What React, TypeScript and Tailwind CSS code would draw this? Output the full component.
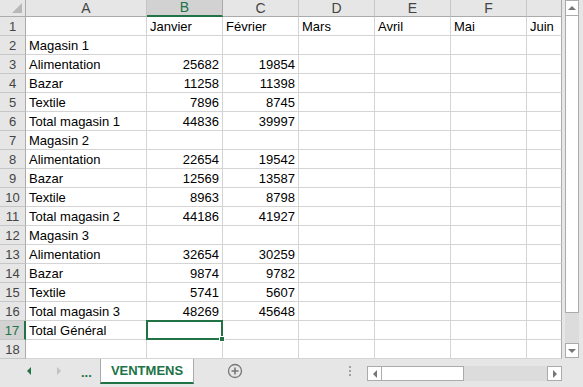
import { Fragment } from "react";

const cols = ["A", "B", "C", "D", "E", "F", ""];

const rows: (string | number)[][] = [
  ["", "Janvier", "Février", "Mars", "Avril", "Mai", "Juin"],
  ["Magasin 1"],
  ["Alimentation", 25682, 19854],
  ["Bazar", 11258, 11398],
  ["Textile", 7896, 8745],
  ["Total magasin 1", 44836, 39997],
  ["Magasin 2"],
  ["Alimentation", 22654, 19542],
  ["Bazar", 12569, 13587],
  ["Textile", 8963, 8798],
  ["Total magasin 2", 44186, 41927],
  ["Magasin 3"],
  ["Alimentation", 32654, 30259],
  ["Bazar", 9874, 9782],
  ["Textile", 5741, 5607],
  ["Total magasin 3", 48269, 45648],
  ["Total Général"],
  [],
];

function Sheet() {
  return (
    <div className="grid grid-cols-[26px_121px_76px_76px_76px_76px_76px_35px] grid-rows-[17px_repeat(18,19px)] w-[562px]">
      {/* corner */}
      <div className="relative bg-[#e6e6e6] border-r border-b border-[#ababab]">
        <div className="absolute right-[3px] bottom-[3px] w-0 h-0 border-l-[10px] border-l-transparent border-b-[10px] border-b-[#b8b8b8]" />
      </div>
      {cols.map((c, i) => (
        <div
          key={i}
          className={
            i === 1
              ? "flex items-center justify-center bg-[#d2d2d2] border-r border-[#ababab] border-b-2 border-b-[#217346] text-[#217346] text-[14px]"
              : i === 6
              ? "flex items-center justify-center bg-[#e6e6e6] border-r border-r-[#ababab] border-b border-b-[#ababab] text-[#444] text-[14px]"
              : "flex items-center justify-center bg-[#e6e6e6] border-r border-r-[#c6c6c6] border-b border-b-[#ababab] text-[#444] text-[14px]"
          }
        >
          {c}
        </div>
      ))}
      {rows.map((r, ri) => (
        <Fragment key={ri}>
          <div
            className={
              ri === 16
                ? "flex items-center justify-center bg-[#d2d2d2] border-r-2 border-r-[#217346] border-b border-b-[#c6c6c6] text-[#217346]"
                : "flex items-center justify-center bg-[#e6e6e6] border-r border-r-[#ababab] border-b border-b-[#c6c6c6] text-[#444]"
            }
          >
            {ri + 1}
          </div>
          {[0, 1, 2, 3, 4, 5, 6].map((ci) => {
            const v = r[ci];
            const num = typeof v === "number";
            const sel = ri === 16 && ci === 1;
            return (
              <div
                key={ci}
                className={
                  (ci === 6 ? "border-r-[#ababab] " : "border-r-[#d4d4d4] ") +
                  (sel ? "z-10 " : "overflow-hidden ") +
                  (num
                    ? "relative flex items-end justify-end pr-[3px] pb-[1px] border-r border-b border-b-[#d4d4d4] whitespace-nowrap"
                    : "relative flex items-end pl-[3px] pb-[1px] border-r border-b border-b-[#d4d4d4] whitespace-nowrap")
                }
              >
                {v}
                {sel && (
                  <div className="absolute -left-[1px] -top-[1px] right-[-1px] bottom-[-1px] border-2 border-[#217346]">
                    <div className="absolute -right-[4px] -bottom-[4px] w-[6px] h-[6px] bg-[#217346] border border-white" />
                  </div>
                )}
              </div>
            );
          })}
        </Fragment>
      ))}
    </div>
  );
}

function VScroll() {
  return (
    <div className="w-[21px] h-[359px] bg-[#e6e6e6] flex flex-col pl-[3px] pr-[4px]">
      <div className="h-[16px] bg-white border border-[#ababab] flex items-center justify-center">
        <div className="w-0 h-0 border-l-[4px] border-r-[4px] border-b-[4px] border-l-transparent border-r-transparent border-b-[#777]" />
      </div>
      <div className="h-[297px] bg-white border border-[#ababab] border-t-0" />
      <div className="flex-1 bg-[#dcdcdc]" />
      <div className="h-[15px] mb-[1px] bg-white border border-[#ababab] flex items-center justify-center">
        <div className="w-0 h-0 border-l-[4px] border-r-[4px] border-t-[4px] border-l-transparent border-r-transparent border-t-[#777]" />
      </div>
    </div>
  );
}

function TabBar() {
  return (
    <div className="h-[28px] bg-[#e6e6e6] flex items-start">
      <div className="w-[100px] h-[23px] flex items-center">
        <div className="ml-[27px] w-0 h-0 border-t-[4px] border-b-[4px] border-r-[4px] border-t-transparent border-b-transparent border-r-[#217346]" />
        <div className="ml-[26px] w-0 h-0 border-t-[4px] border-b-[4px] border-l-[4px] border-t-transparent border-b-transparent border-l-[#c2c2c2]" />
        <div className="ml-[20px] text-[#217346] font-bold text-[13px] leading-none mt-[4px]">...</div>
      </div>
      <div className="w-[94px] h-[25px] bg-white border-x border-[#ababab] border-b-[2px] border-b-[#217346] flex items-center justify-center text-[#217346] font-bold text-[13px]">
        VENTMENS
      </div>
      <div className="w-[82px] h-[23px] flex items-center justify-center">
        <svg width="16" height="16" viewBox="0 0 16 16">
          <circle cx="8" cy="8" r="6.5" fill="none" stroke="#777" strokeWidth="1.3" />
          <path d="M8 4.5v7M4.5 8h7" stroke="#777" strokeWidth="1.6" />
        </svg>
      </div>
      <div className="w-[91px] h-[23px] flex flex-col items-end justify-center gap-[2px] pr-[16px] pt-[1px]">
        <div className="w-[2px] h-[2px] bg-[#a0a0a0]" />
        <div className="w-[2px] h-[2px] bg-[#a0a0a0]" />
        <div className="w-[2px] h-[2px] bg-[#a0a0a0]" />
      </div>
      <div className="mt-[7px] w-[195px] h-[15px] flex">
        <div className="w-[15px] bg-white border border-[#ababab] flex items-center justify-center">
          <div className="w-0 h-0 border-t-[4px] border-b-[4px] border-r-[4px] border-t-transparent border-b-transparent border-r-[#777]" />
        </div>
        <div className="w-[82px] bg-white border-y border-r border-[#ababab]" />
        <div className="flex-1 bg-[#dcdcdc]" />
        <div className="w-[15px] bg-white border border-[#ababab] flex items-center justify-center">
          <div className="w-0 h-0 border-t-[4px] border-b-[4px] border-l-[4px] border-t-transparent border-b-transparent border-l-[#777]" />
        </div>
      </div>
    </div>
  );
}

export default function App() {
  return (
    <div className="w-[583px] h-[387px] overflow-hidden bg-white text-[13px] leading-[15px] text-black font-['Liberation_Sans',Arial,sans-serif]">
      <div className="flex h-[359px] border-b border-[#ababab]">
        <Sheet />
        <VScroll />
      </div>
      <TabBar />
    </div>
  );
}
